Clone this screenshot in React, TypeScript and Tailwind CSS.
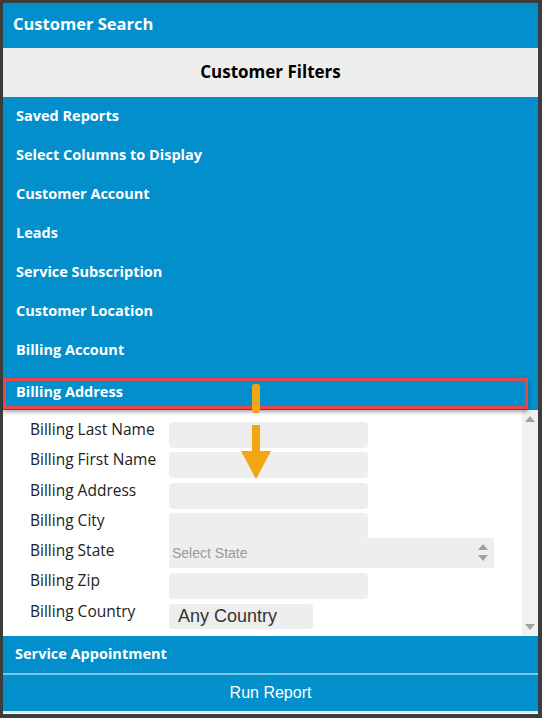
import React from "react";

const items = [
  "Saved Reports",
  "Select Columns to Display",
  "Customer Account",
  "Leads",
  "Service Subscription",
  "Customer Location",
  "Billing Account",
];

const head = { fontFamily: '"Open Sans", "Noto Sans", sans-serif' };
const arial = { fontFamily: '"Liberation Sans", Arial, sans-serif' };

function Row({ label, children }: { label: string; children: React.ReactNode }) {
  return (
    <div className="flex h-[30.3px] items-start">
      <div className="w-[139px] shrink-0 text-[15.5px] text-[#222] leading-[15px]" style={head}>
        {label}
      </div>
      {children}
    </div>
  );
}

function Input() {
  return <div className="h-[26px] w-[199px] rounded-[4px] bg-[#eeeeee]" />;
}

export default function App() {
  return (
    <div className="w-[542px] h-[718px] bg-[#3c3c3c] pt-[3px] pl-[3px] pr-[4px] pb-[4px]">
      <div className="relative flex h-full flex-col bg-white">
        <div className="flex h-[45px] items-center bg-[#028fcc] px-[10px] pb-[3px] text-[16.5px] font-bold text-white" style={head}>
          Customer Search
        </div>
        <div className="flex h-[49px] items-center justify-center bg-[#eeeeee] pb-[2px] text-[17px] font-bold text-black" style={head}>
          Customer Filters
        </div>
        {items.map((t) => (
          <div key={t} className="flex h-[39px] items-center bg-[#028fcc] px-[13px] pb-[1px] text-[14.5px] font-bold text-white" style={head}>
            {t}
          </div>
        ))}
        <div className="flex h-[40px] items-end bg-[#028fcc] pb-[1px]">
          <div className="relative z-10 flex h-[31px] w-[525px] items-center border-[3px] border-[#e8474c] pb-[3px] pl-[10px] text-[14.5px] font-bold text-white shadow-[0_3px_4px_rgba(0,0,0,0.35)]" style={head}>
            Billing Address
          </div>
        </div>
        <div className="flex h-[226px]">
          <div className="flex-1 pl-[27px] pt-[12px]">
            <Row label="Billing Last Name"><Input /></Row>
            <Row label="Billing First Name"><Input /></Row>
            <Row label="Billing Address"><Input /></Row>
            <Row label="Billing City"><Input /></Row>
            <Row label="Billing State">
              <div className="relative -mt-[5px] flex h-[30px] w-[325px] items-center bg-[#eeeeee] pl-[3px] text-[14px] text-[#9a9a9a]" style={arial}>
                Select State
                <div className="absolute right-[6px] top-[6px] flex flex-col gap-[5px]">
                  <svg width="10" height="6" viewBox="0 0 10 6"><path d="M0 6 L5 0 L10 6 Z" fill="#a0a0a0" /></svg>
                  <svg width="10" height="6" viewBox="0 0 10 6"><path d="M0 0 L5 6 L10 0 Z" fill="#a0a0a0" /></svg>
                </div>
              </div>
            </Row>
            <Row label="Billing Zip"><Input /></Row>
            <Row label="Billing Country">
              <div className="flex h-[25px] w-[144px] items-center rounded-[3px] bg-[#eeeeee] pl-[9px] text-[18px] text-[#333]" style={arial}>
                Any Country
              </div>
            </Row>
          </div>
          <div className="flex w-[16px] flex-col items-center justify-between bg-[#f1f1f1] py-[6px]">
            <svg width="10" height="6" viewBox="0 0 10 6"><path d="M0 6 L5 0 L10 6 Z" fill="#a3a3a3" /></svg>
            <svg width="10" height="6" viewBox="0 0 10 6"><path d="M0 0 L5 6 L10 0 Z" fill="#a3a3a3" /></svg>
          </div>
        </div>
        <div className="flex h-[39px] items-center border-b-[2px] border-[#7cc6e8] bg-[#028fcc] px-[12px] pb-[1px] text-[14.5px] font-bold text-white" style={head}>
          Service Appointment
        </div>
        <div className="flex h-[36px] items-center justify-center bg-[#028fcc] text-[16px] text-white" style={arial}>
          Run Report
        </div>
        <div className="h-[2px] bg-[#d8e6ee]" />
        <svg className="absolute left-[233px] top-[378px] z-20" width="40" height="100" viewBox="0 0 40 100">
          <rect x="16" y="3" width="8" height="29" rx="3" fill="#f3a614" />
          <rect x="16" y="44" width="8" height="34" fill="#f3a614" />
          <path d="M5 70 L35 70 L20 98 Z" fill="#f3a614" />
        </svg>
      </div>
    </div>
  );
}
